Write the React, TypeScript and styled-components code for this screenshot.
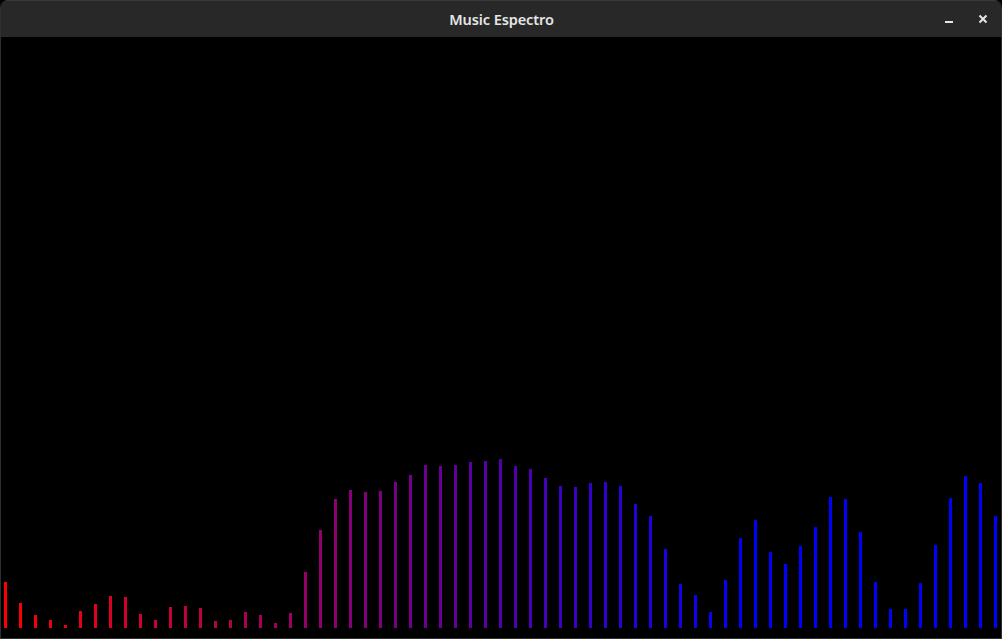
import styled, { createGlobalStyle } from 'styled-components';

const Global = createGlobalStyle`
  html, body {
    margin: 0;
    padding: 0;
    background: #000;
  }
  body {
    font-family: "Noto Sans", "DejaVu Sans", sans-serif;
  }
`;

const Window = styled.div`
  width: 1002px;
  height: 639px;
  box-sizing: border-box;
  display: flex;
  flex-direction: column;
  border: 1px solid #2f2f2f;
  border-top: none;
  border-radius: 8px 8px 0 0;
  overflow: hidden;
  background: #000;
`;

const TitleBar = styled.header`
  height: 37px;
  flex: 0 0 37px;
  display: grid;
  grid-template-columns: 1fr auto 1fr;
  align-items: center;
  background: #282828;
  border-top: 1px solid #3a3a3a;
  box-sizing: border-box;
`;

const Title = styled.h1`
  grid-column: 2;
  margin: 0 0 0 1px;
  color: #e6e6e6;
  font-size: 14.5px;
  font-weight: 600;
  letter-spacing: -0.1px;
`;

const Controls = styled.div`
  grid-column: 3;
  justify-self: end;
  display: flex;
  align-items: center;
  gap: 10px;
  padding-right: 6px;
`;

const CtlButton = styled.button`
  width: 24px;
  height: 24px;
  padding: 0;
  border: none;
  background: transparent;
  color: #e6e6e6;
  display: flex;
  align-items: center;
  justify-content: center;
`;

const Canvas = styled.main`
  flex: 1;
  display: flex;
  align-items: flex-end;
  gap: 12px;
  padding: 0 0 10px 3px;
  background: #000;
`;

const Bar = styled.div`
  width: 3px;
  flex: 0 0 3px;
`;

const heights = [
  46, 25, 13, 8, 3, 17, 24, 32, 31, 14, 8, 21, 22, 20, 7, 8, 16, 13, 5, 15,
  56, 98, 129, 138, 136, 137, 146, 153, 163, 162, 163, 166, 167, 169, 162, 159,
  150, 142, 141, 145, 146, 142, 124, 112, 79, 44, 33, 16, 48, 90, 108, 76, 64,
  82, 101, 131, 129, 96, 46, 19, 19, 45, 83, 130, 152, 145, 112,
];

function barColor(i: number) {
  const t = Math.min(1, i / 49);
  const r = Math.round(255 * (1 - t));
  const b = Math.round(255 * t);
  return `rgb(${r}, 0, ${b})`;
}

export default function App() {
  return (
    <>
      <Global />
      <Window>
        <TitleBar>
          <Title>Music Espectro</Title>
          <Controls>
            <CtlButton aria-label="Minimize">
              <svg width="10" height="10" viewBox="0 0 10 10">
                <rect x="1" y="7" width="8" height="2" fill="currentColor" />
              </svg>
            </CtlButton>
            <CtlButton aria-label="Close">
              <svg width="10" height="10" viewBox="0 0 10 10">
                <path d="M1.5 1.5 L8.5 8.5 M8.5 1.5 L1.5 8.5" stroke="currentColor" strokeWidth="2" />
              </svg>
            </CtlButton>
          </Controls>
        </TitleBar>
        <Canvas>
          {heights.map((h, i) => (
            <Bar key={i} style={{ height: h, background: barColor(i) }} />
          ))}
        </Canvas>
      </Window>
    </>
  );
}
